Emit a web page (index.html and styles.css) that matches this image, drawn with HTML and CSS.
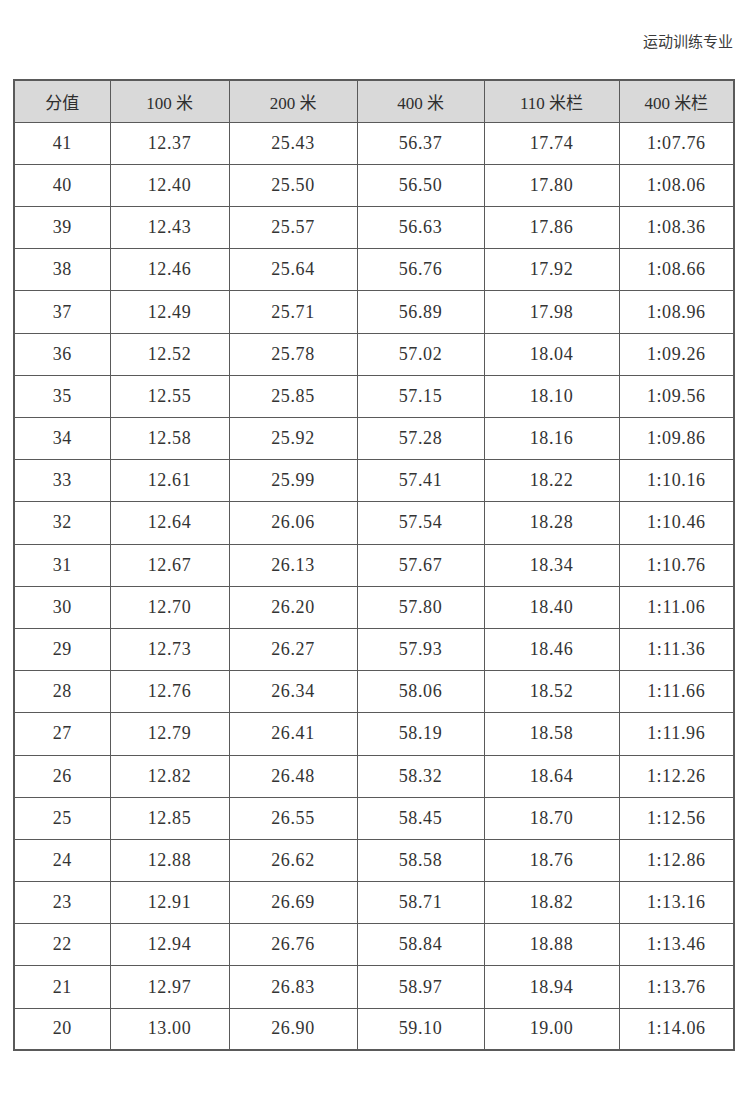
FILE: index.html
```html
<!DOCTYPE html>
<html>
<head>
<meta charset="utf-8">
<link rel="stylesheet" href="styles.css">
</head>
<body>
<div class="page">
  <div class="title">运动训练专业</div>
  <table class="scores">
    <colgroup>
      <col class="c1"><col class="c2"><col class="c3"><col class="c4"><col class="c5"><col class="c6">
    </colgroup>
    <thead>
      <tr><th>分值</th><th>100 米</th><th>200 米</th><th>400 米</th><th>110 米栏</th><th>400 米栏</th></tr>
    </thead>
    <tbody>
      <tr><td>41</td><td>12.37</td><td>25.43</td><td>56.37</td><td>17.74</td><td>1:07.76</td></tr>
      <tr><td>40</td><td>12.40</td><td>25.50</td><td>56.50</td><td>17.80</td><td>1:08.06</td></tr>
      <tr><td>39</td><td>12.43</td><td>25.57</td><td>56.63</td><td>17.86</td><td>1:08.36</td></tr>
      <tr><td>38</td><td>12.46</td><td>25.64</td><td>56.76</td><td>17.92</td><td>1:08.66</td></tr>
      <tr><td>37</td><td>12.49</td><td>25.71</td><td>56.89</td><td>17.98</td><td>1:08.96</td></tr>
      <tr><td>36</td><td>12.52</td><td>25.78</td><td>57.02</td><td>18.04</td><td>1:09.26</td></tr>
      <tr><td>35</td><td>12.55</td><td>25.85</td><td>57.15</td><td>18.10</td><td>1:09.56</td></tr>
      <tr><td>34</td><td>12.58</td><td>25.92</td><td>57.28</td><td>18.16</td><td>1:09.86</td></tr>
      <tr><td>33</td><td>12.61</td><td>25.99</td><td>57.41</td><td>18.22</td><td>1:10.16</td></tr>
      <tr><td>32</td><td>12.64</td><td>26.06</td><td>57.54</td><td>18.28</td><td>1:10.46</td></tr>
      <tr><td>31</td><td>12.67</td><td>26.13</td><td>57.67</td><td>18.34</td><td>1:10.76</td></tr>
      <tr><td>30</td><td>12.70</td><td>26.20</td><td>57.80</td><td>18.40</td><td>1:11.06</td></tr>
      <tr><td>29</td><td>12.73</td><td>26.27</td><td>57.93</td><td>18.46</td><td>1:11.36</td></tr>
      <tr><td>28</td><td>12.76</td><td>26.34</td><td>58.06</td><td>18.52</td><td>1:11.66</td></tr>
      <tr><td>27</td><td>12.79</td><td>26.41</td><td>58.19</td><td>18.58</td><td>1:11.96</td></tr>
      <tr><td>26</td><td>12.82</td><td>26.48</td><td>58.32</td><td>18.64</td><td>1:12.26</td></tr>
      <tr><td>25</td><td>12.85</td><td>26.55</td><td>58.45</td><td>18.70</td><td>1:12.56</td></tr>
      <tr><td>24</td><td>12.88</td><td>26.62</td><td>58.58</td><td>18.76</td><td>1:12.86</td></tr>
      <tr><td>23</td><td>12.91</td><td>26.69</td><td>58.71</td><td>18.82</td><td>1:13.16</td></tr>
      <tr><td>22</td><td>12.94</td><td>26.76</td><td>58.84</td><td>18.88</td><td>1:13.46</td></tr>
      <tr><td>21</td><td>12.97</td><td>26.83</td><td>58.97</td><td>18.94</td><td>1:13.76</td></tr>
      <tr><td>20</td><td>13.00</td><td>26.90</td><td>59.10</td><td>19.00</td><td>1:14.06</td></tr>
    </tbody>
  </table>
</div>
</body>
</html>
```

FILE: styles.css
```css
html, body {
  margin: 0;
  padding: 0;
  background: #ffffff;
}

.page {
  width: 750px;
  height: 1095px;
  box-sizing: border-box;
  padding: 31px 17px 0 13px;
  color: #333333;
}

.title {
  text-align: right;
  font-family: "Noto Sans CJK SC", sans-serif;
  font-size: 15px;
  line-height: 20px;
  color: #3a3a3a;
  margin-bottom: 28px;
}

.scores {
  width: 720px;
  border-collapse: collapse;
  table-layout: fixed;
  border: 2px solid #5a5a5a;
}

.c1 { width: 96px; }
.c2 { width: 119px; }
.c3 { width: 128px; }
.c4 { width: 127px; }
.c5 { width: 135px; }
.c6 { width: 115px; }

.scores th,
.scores td {
  border: 1.5px solid #5a5a5a;
  text-align: center;
  vertical-align: middle;
  padding: 0;
  height: 42.2px;
  box-sizing: border-box;
}

.scores th {
  background: #d9d9d9;
  font-weight: normal;
  font-size: 17px;
  color: #2e2e2e;
  font-family: "Liberation Serif", "Noto Sans CJK SC", serif;
}

.scores td {
  font-family: "Liberation Serif", serif;
  font-size: 18px;
  letter-spacing: 0.6px;
  color: #333333;
}
```
